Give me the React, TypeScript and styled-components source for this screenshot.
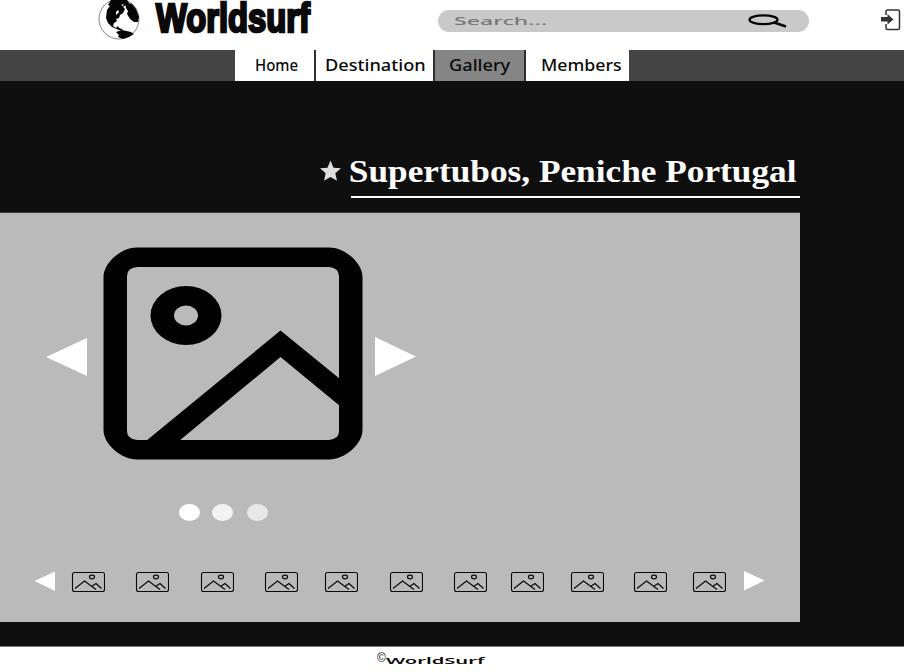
import React from "react";
import styled, { createGlobalStyle } from "styled-components";

const GlobalStyle = createGlobalStyle`
  * { box-sizing: border-box; }
  html, body { margin: 0; padding: 0; background: #fff; overflow: hidden; }
`;

const Page = styled.div`
  width: 904px;
  height: 672px;
  display: flex;
  flex-direction: column;
  overflow: hidden;
  font-family: "Noto Sans", "Open Sans", sans-serif;
`;

const Header = styled.header`
  height: 50px;
  flex: none;
  display: flex;
  align-items: flex-start;
  background: #fff;
`;

const GlobeIcon = styled.svg`
  width: 42px;
  height: 41px;
  margin-left: 98px;
  flex: none;
`;

const Stretch = styled.span<{ $x: number }>`
  display: block;
  flex: none;
  width: max-content;
  white-space: nowrap;
  transform: scaleX(${(p) => p.$x});
  transform-origin: 0 0;
`;

const Brand = styled.h1`
  width: 282px;
  height: 50px;
  margin: 0 0 0 16px;
  font: bold 40px/37px "Liberation Sans", Arial, sans-serif;
  color: #0a0a0a;
  -webkit-text-stroke: 2.6px #0a0a0a;
`;

const SearchBar = styled.div`
  width: 371px;
  height: 22px;
  margin-top: 10px;
  padding-left: 16px;
  display: flex;
  align-items: center;
  background: #c9c9c9;
  border-radius: 11px;
`;

const SearchHint = styled.div`
  width: 293px;
  font-size: 11px;
  font-weight: 500;
  line-height: 22px;
  color: #777;
`;

const SearchIcon = styled.svg`
  width: 42px;
  height: 14px;
`;

const LoginIcon = styled.svg`
  width: 20px;
  height: 22px;
  margin: 9px 0 0 72px;
`;

const Nav = styled.nav`
  height: 31px;
  flex: none;
  display: flex;
  padding-left: 235px;
  background: #444;
`;

const NavItem = styled.a<{ $w: number; $pad: number; $active?: boolean }>`
  width: ${(p) => p.$w}px;
  padding-left: ${(p) => p.$pad}px;
  display: block;
  font-size: 17px;
  font-weight: 500;
  line-height: 30px;
  color: #0a0a0a;
  background: ${(p) => (p.$active ? "#858585" : "#fff")};
  & + & { border-left: 2px solid #303030; }
`;

const Main = styled.main`
  height: 565px;
  flex: none;
  background: #0f0f0f;
`;

const TitleRow = styled.div`
  height: 132px;
  display: flex;
  align-items: flex-start;
  padding: 71px 0 0 319px;
`;

const StarIcon = styled.svg`
  width: 23px;
  height: 22px;
  margin-top: 8px;
  flex: none;
`;

const Title = styled.h2`
  width: 449px;
  height: 46px;
  margin: 0 0 0 9px;
  border-bottom: 2px solid #fff;
  font: bold 32px/38px "Liberation Serif", serif;
  color: #fff;
  text-indent: -2px;
`;

const Panel = styled.section`
  width: 800px;
  height: 409px;
  background: #bababa;
  box-shadow: 0 -1px 0 #3a3a3a;
`;

const Viewer = styled.div`
  height: 248px;
  display: flex;
  align-items: flex-start;
  padding: 34px 0 0 46px;
`;

const BigArrow = styled.svg<{ $gap: number }>`
  width: 41px;
  height: 40px;
  margin: 90px ${(p) => p.$gap}px 0 0;
  flex: none;
`;

const Photo = styled.svg`
  width: 260px;
  height: 213px;
  margin-right: 12px;
  flex: none;
`;

const Dots = styled.div`
  height: 110px;
  padding: 43px 0 0 179px;
  display: flex;
`;

const Dot = styled.i<{ $tone: string; $gap: number }>`
  width: 21px;
  height: 17px;
  margin-right: ${(p) => p.$gap}px;
  border-radius: 50%;
  background: ${(p) => p.$tone};
`;

const Strip = styled.div`
  display: flex;
  align-items: flex-start;
  padding-left: 34px;
`;

const SmallArrow = styled.svg<{ $gap: number }>`
  width: 21px;
  height: 20px;
  margin-left: ${(p) => p.$gap}px;
  flex: none;
`;

const Thumb = styled.svg<{ $gap: number }>`
  width: 34px;
  height: 22px;
  margin: 0 0 0 ${(p) => p.$gap}px;
  flex: none;
`;

const Footer = styled.footer`
  height: 26px;
  flex: none;
  display: flex;
  align-items: flex-start;
  padding-left: 377px;
  background: #fff;
  border-top: 1px solid #777;
  color: #0a0a0a;
`;

const Copyright = styled.span`
  width: 9px;
  font: 12px/22px "Liberation Sans", sans-serif;
`;

const FooterName = styled.span`
  font: 600 9.5px/14px "Noto Sans", sans-serif;
  margin-top: 7px;
`;

const thumbGaps = [16, 30, 31, 30, 26, 31, 30, 23, 26, 29, 25];

const tabs = [
  { label: "Home", w: 79, pad: 20, x: 0.88 },
  { label: "Destination", w: 119, pad: 9, x: 1.07 },
  { label: "Gallery", w: 91, pad: 14, x: 1.07 },
  { label: "Members", w: 105, pad: 15, x: 1.045 },
];

export default function App() {
  return (
    <>
      <GlobalStyle />
      <Page>
        <Header>
          <GlobeIcon viewBox="0 0 42 41">
            <circle cx="21" cy="19" r="20" fill="#fff" stroke="#555" strokeWidth=".7" />
            <path d="M13 0H29L31 3 28 5 25 7 27 9 25 13 22 15 21 18 18 19 19 21 16 23 15 26 18 28 20 26 21 28 24 29 25 31 21 30 14 27 10 23 8 18 9 10 12 6 10 5Z" fill="#050505" />
            <path d="M27 2 34 4 38 9 41 17 40 22 36 22 32 19 29 14 30 11 28 8Z" fill="#050505" />
            <path d="M18 32 24 30 33 32 36 34 31 37 25 39 20 37 21 35Z" fill="#050505" />
            <path d="M18 12 20 10 21 12 18 15ZM23 5 26 4 25 6Z" fill="#fff" />
          </GlobeIcon>
          <Brand><Stretch $x={0.818}>Worldsurf</Stretch></Brand>
          <SearchBar>
            <SearchHint><Stretch $x={2.1}>Search...</Stretch></SearchHint>
            <SearchIcon viewBox="0 0 42 14">
              <ellipse cx="16.500" cy="5.800" rx="14" ry="4.400" fill="none" stroke="#050505" strokeWidth="2.300" />
              <path d="M27 8.500 39 12.500" stroke="#050505" strokeWidth="2.800" />
            </SearchIcon>
          </SearchBar>
          <LoginIcon viewBox="0 0 20 22">
            <path d="M5 6V2.500Q5 1 6.500 1H17Q18.500 1 18.500 2.500V19Q18.500 20.500 17 20.500H6.500Q5 20.500 5 19V15" fill="none" stroke="#333" strokeWidth="1.500" />
            <path d="M0 8H6.500V5L12.500 10.500 6.500 15.500V12.500H0Z" fill="#333" />
          </LoginIcon>
        </Header>
        <Nav>
          {tabs.map((t) => (
            <NavItem key={t.label} $w={t.w} $pad={t.pad} $active={t.label === "Gallery"}>
              <Stretch $x={t.x}>{t.label}</Stretch>
            </NavItem>
          ))}
        </Nav>
        <Main>
          <TitleRow>
            <StarIcon viewBox="0 0 23 22">
              <path d="M11.500 .5 14.500 7.700 22 8.300 16.300 13.300 18 20.800 11.500 17 5 20.800 6.700 13.300 1 8.300 8.500 7.700Z" fill="#ddd" />
            </StarIcon>
            <Title><Stretch $x={1.102}>Supertubos, Peniche Portugal</Stretch></Title>
          </TitleRow>
          <Panel>
            <Viewer>
              <BigArrow $gap={16} viewBox="0 0 41 40"><path d="M0 20 41 1V39Z" fill="#fff" /></BigArrow>
              <Photo viewBox="0 0 260 213">
                <path fillRule="evenodd" fill="#020202" d="M34 .5H226C242 .5 259.500 16 259.500 30V183C259.500 197 242 212.500 226 212.500H34C18 212.500 .5 197 .5 183V30C.5 16 18 .5 34 .5ZM34 20Q24 21 24 29V184Q24 192 34 193H226Q236 192 236 184V29Q236 21 226 20Z" />
                <path fillRule="evenodd" fill="#020202" d="M83 39A35.500 29.500 0 1 0 83 98 35.500 29.500 0 1 0 83 39ZM83 58.500A12 10 0 1 1 83 78.500 12 10 0 1 1 83 58.500Z" />
                <path d="M43 194 177.500 83.500 237 132V159L177.500 110 76 194Z" fill="#020202" />
              </Photo>
              <BigArrow $gap={0} viewBox="0 0 41 40"><path d="M41 19.500 0 0V39Z" fill="#fff" /></BigArrow>
            </Viewer>
            <Dots>
              <Dot $tone="#fff" $gap={12} />
              <Dot $tone="#f3f3f3" $gap={14} />
              <Dot $tone="#e8e8e8" $gap={0} />
            </Dots>
            <Strip>
              <SmallArrow $gap={0} viewBox="0 0 21 20"><path d="M.5 10 21 .5V20Z" fill="#fff" /></SmallArrow>
              {thumbGaps.map((gap, i) => (
                <Thumb key={i} $gap={gap} viewBox="0 0 34 22" fill="none" stroke="#080808">
                  <rect x="1.500" y="1.500" width="32" height="19" rx="2" strokeWidth="1.100" />
                  <path d="M4 17.500 13.500 10 25 18.500M20.500 15.500 25 12.500 30.500 17.500" strokeWidth="1.200" />
                  <ellipse cx="21" cy="6" rx="2.500" ry="1.800" strokeWidth="1.200" />
                </Thumb>
              ))}
              <SmallArrow $gap={18} viewBox="0 0 21 20"><path d="M20.500 9.500 0 0V19.500Z" fill="#fff" /></SmallArrow>
            </Strip>
          </Panel>
        </Main>
        <Footer>
          <Copyright>©</Copyright>
          <FooterName><Stretch $x={2.12}>WorldSurf</Stretch></FooterName>
        </Footer>
      </Page>
    </>
  );
}
